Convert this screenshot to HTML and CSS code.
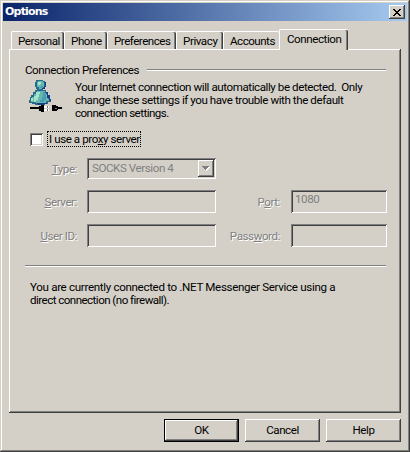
FILE: index.html
```html
<!DOCTYPE html>
<html lang="en">
<head>
<meta charset="utf-8">
<title>Options</title>
<link rel="stylesheet" href="styles.css">
</head>
<body>
<main class="window">
  <header class="titlebar">
    <h1>Options</h1>
    <button class="close" aria-label="Close"><svg width="8" height="7" viewBox="0 0 8 7" shape-rendering="crispEdges"><path d="M0 0h2v1h1v1h2v-1h1v-1h2v1h-1v1h-1v1h-1v1h1v1h1v1h1v1h-2v-1h-1v-1h-2v1h-1v1h-2v-1h1v-1h1v-1h1v-1h-1v-1h-1v-1h-1z"/></svg></button>
  </header>
  <nav class="tabs">
    <div class="tab personal"><span>Personal</span></div>
    <div class="tab phone"><span>Phone</span></div>
    <div class="tab preferences"><span>Preferences</span></div>
    <div class="tab privacy"><span>Privacy</span></div>
    <div class="tab accounts"><span>Accounts</span></div>
    <div class="tab connection active"><span>Connection</span></div>
  </nav>
  <section class="panel">
    <div class="heading"><h2>Connection Preferences</h2><i class="rule"></i></div>
    <div class="intro">
      <svg class="buddy" width="34" height="34" viewBox="0 0 34 34" shape-rendering="crispEdges">
        <path fill="#266b8b" d="M10 0h4v1h2v2h1v4h-1v2h-2v1h3v2h2v3h2v4h1v3h-3v2h-3v1h-10v-1h-3v-1h-3v-3h1v-3h1v-2h2v-3h2v-2h2v-1h-1v-2h-1v-5h1v-2h2z"/>
        <path fill="#65b8ac" d="M9 1h5v1h1v5h-2v2h-3v-2h-2v-5h1zM8 11h8v2h2v3h1v3h1v2h-3v2h-10v-1h-5v-2h1v-3h2v-3h3z"/>
        <path fill="#a6e4cc" d="M9 2h3v2h-1v1h-2zM7 12h4v2h-1v3h-1v3h-2v2h-2v-6h2zM2 18h2v3h-2z"/>
        <path fill="#4b9bb8" d="M12 6h2v2h-3v-1h1zM14 12h2v2h1v6h-2v2h-4v-2h2v-3h1z"/>
        <path fill="#183f80" d="M15 2h2v5h-1v2h-3v-1h2v-2h1v-3h-1zM17 12h2v3h2v4h1v2h-2v-3h-2v-4h-1zM8 23h10v1h-3v1h-6v-1h-1z"/>
        <path d="M1 27h9v-1h2v-1h3v7h-3v-1h-2v-2h-9zM23 25h4v1h2v1h4v2h-4v1h-1v1h-5z"/>
        <path fill="#fff" d="M15 26h5v2h-5zM15 29h5v2h-5z"/><path fill="#777" d="M18 26h1v2h-1zM18 29h1v2h-1zM26 28h2v1h-2z"/>
      </svg>
      <p><span class="p1">Your Internet connection will automatically be detected.&nbsp; Only</span><span class="p2">change these settings if you have trouble with the default</span><span class="p3">connection settings.</span></p>
    </div>
    <label class="proxy"><i class="box"></i><span class="focus"><span class="px">I use a pro<u>x</u>y server</span></span></label>
    <div class="form">
      <label class="type"><span><u>T</u>ype:</span></label>
      <div class="field select"><span>SOCKS Version 4</span><i class="drop"><svg width="8" height="5" viewBox="0 0 8 5" shape-rendering="crispEdges"><path fill="#fff" d="M1 1h7v1h-1v1h-1v1h-1v1h-1z"/><path fill="#808080" d="M0 0h7v1h-1v1h-1v1h-1v1h-1v-1h-1v-1h-1v-1h-1z"/></svg></i></div>
      <label class="server"><span><u>S</u>erver:</span></label>
      <div class="field input"></div>
      <label class="port"><span>P<u>o</u>rt:</span></label>
      <div class="field input"><span>1080</span></div>
      <label class="user"><span><u>U</u>ser ID:</span></label>
      <div class="field input"></div>
      <label class="password"><span>Pass<u>w</u>ord:</span></label>
      <div class="field input"></div>
    </div>
    <i class="rule divider"></i>
    <p class="status"><span class="s1">You are currently connected to .NET Messenger Service using a</span><span class="s2">direct connection (no firewall).</span></p>
  </section>
  <footer class="actions">
    <button class="default"><span class="ok">OK</span></button>
    <button><span class="cancel">Cancel</span></button>
    <button><span class="help">Help</span></button>
  </footer>
</main>
</body>
</html>
```
FILE: styles.css
```css
* { box-sizing: border-box; }
body, h1, h2, p { margin: 0; }
body { width: 410px; height: 452px; overflow: hidden; background: #d4d0c8; color: #000; font: 11.6px/13px Roboto, "Liberation Sans", sans-serif; letter-spacing: -.43px; }
button { font: inherit; letter-spacing: inherit; color: inherit; padding: 0; background: #d4d0c8; border: 0; border-radius: 0; }
span { white-space: nowrap; }
.window { width: 410px; height: 452px; padding: 3px; box-shadow: inset -1px -1px #404040, inset 1px 1px #d4d0c8, inset -2px -2px #808080, inset 2px 2px #fff; }
.titlebar { display: flex; align-items: center; justify-content: space-between; height: 18px; padding: 0 2px; background: linear-gradient(90deg, #0a246a, #a6caf0); }
h1 { color: #fff; font: bold 11px/18px "DejaVu Sans", sans-serif; letter-spacing: -.8px; }
.close { display: grid; place-items: center; width: 16px; height: 14px; box-shadow: inset -1px -1px #404040, inset 1px 1px #fff, inset -2px -2px #808080; }
.tabs { display: flex; align-items: flex-end; height: 28px; padding-left: 8px; }
.tab { position: relative; height: 18px; padding: 3px 0 0 6px; border: solid #fff; border-width: 1px 0 0 1px; border-radius: 2px 2px 0 0; box-shadow: inset -1px 0 #404040, inset -2px 0 #808080; }
.personal { width: 53px; } .phone { width: 43px; } .preferences { width: 69px; letter-spacing: -.5px; } .privacy { width: 47px; } .accounts { width: 56px; box-shadow: none; letter-spacing: -.5px; }
.tab.active { z-index: 1; width: 69px; height: 21px; margin-bottom: -1px; padding-left: 7px; background: #d4d0c8; }
.panel { width: 392px; height: 364px; margin-left: 6px; padding: 15px 14px 0 16px; box-shadow: inset -1px -1px #404040, inset 1px 1px #fff, inset -2px -2px #808080; }
.heading { display: flex; height: 12px; margin-bottom: 2px; align-items: center; justify-content: space-between; }
h2 { font: inherit; white-space: nowrap; }
.rule { display: block; height: 2px; background: linear-gradient(#808080 50%, #fff 50%); }
.heading .rule { width: 239px; margin: -1px 1px 0 0; }
.intro { display: flex; padding-left: 4px; height: 53px; }
.intro p { padding: 3px 0 0 12px; }
.buddy { flex: none; margin-top: 2px; }
.intro p span, .status span { display: block; }
.p3 { letter-spacing: -.55px; }
.proxy { display: flex; padding-left: 5px; height: 16px; align-items: center; }
.box { width: 13px; height: 13px; background: #fff; box-shadow: inset 1px 1px #808080, inset -1px -1px #fff, inset 2px 2px #404040, inset -2px -2px #d4d0c8; }
.focus { width: 94px; height: 16px; margin-left: 4px; padding: 1px 0 0 1px; border: 1px dotted #000; }
.form { display: grid; grid-template-columns: 52px 129px 55px 96px; column-gap: 10px; grid-template-rows: 21px 23px 23px; row-gap: 11px; margin-top: 11px; color: #808080; }
.form label { display: flex; align-items: center; justify-content: flex-end; padding-top: 2px; text-shadow: 1px 1px #fff; }
.field { box-shadow: inset 1px 1px #808080, inset -1px -1px #fff, inset 2px 2px #404040; }
.input { padding: 3px 0 0 4px; }
.select { display: flex; justify-content: space-between; padding: 2px; align-items: center; grid-column: 2 / 5; width: 129px; }
.select span { padding-left: 3px; }
.drop { display: grid; place-items: center; width: 16px; height: 17px; box-shadow: inset -1px -1px #404040, inset 1px 1px #fff, inset -2px -2px #808080; }
.port, .password { padding-right: 1px; }
.divider { width: 361px; margin-top: 18px; }
.status { margin: 14px 0 0 5px; }
.s1 { letter-spacing: -.33px; }
.s2 { letter-spacing: -.55px; }
u { text-underline-offset: 1px; text-decoration-thickness: 1px; }
.actions { display: flex; justify-content: flex-end; gap: 6px; margin-top: 6px; padding-right: 6px; }
.actions button { width: 75px; height: 23px; box-shadow: inset -1px -1px #404040, inset 1px 1px #fff, inset -2px -2px #808080; }
.actions .default { border: 1px solid #000; }
```
